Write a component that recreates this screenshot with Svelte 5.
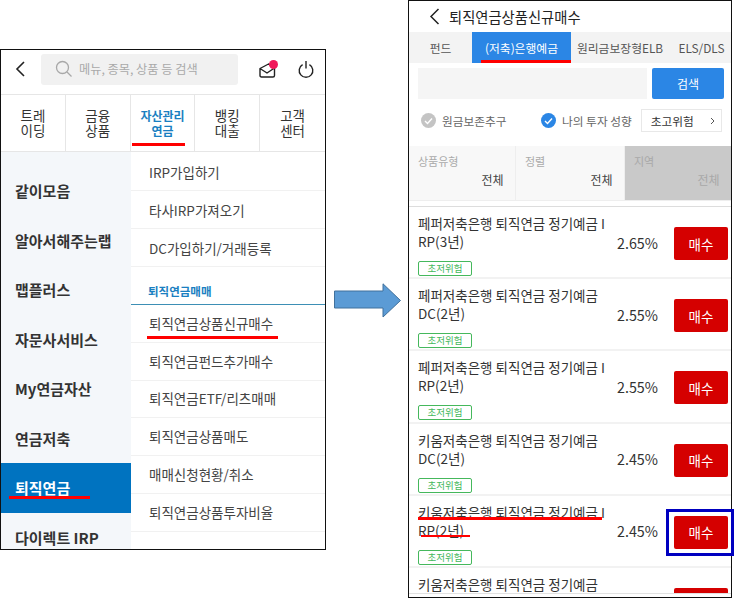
<script>
	const navItems = [
		{ lines: ['트레', '이딩'] },
		{ lines: ['금융', '상품'] },
		{ lines: ['자산관리', '연금'], active: true },
		{ lines: ['뱅킹', '대출'] },
		{ lines: ['고객', '센터'] }
	];
	const sideMenu = ['같이모음', '알아서해주는랩', '맵플러스', '자문사서비스', 'My연금자산', '연금저축', '퇴직연금', '다이렉트 IRP'];
	const topLinks = ['IRP가입하기', '타사IRP가져오기', 'DC가입하기/거래등록'];
	const tradeLinks = ['퇴직연금상품신규매수', '퇴직연금펀드추가매수', '퇴직연금ETF/리츠매매', '퇴직연금상품매도', '매매신청현황/취소', '퇴직연금상품투자비율'];
	const tabs = ['펀드', '(저축)은행예금', '원리금보장형ELB', 'ELS/DLS'];
	const filters = [
		{ label: '상품유형', value: '전체' },
		{ label: '정렬', value: '전체' },
		{ label: '지역', value: '전체', off: true }
	];
	const products = [
		{ lines: ['페퍼저축은행 퇴직연금 정기예금 I', 'RP(3년)'], rate: '2.65%' },
		{ lines: ['페퍼저축은행 퇴직연금 정기예금', 'DC(2년)'], rate: '2.55%' },
		{ lines: ['페퍼저축은행 퇴직연금 정기예금 I', 'RP(2년)'], rate: '2.55%' },
		{ lines: ['키움저축은행 퇴직연금 정기예금', 'DC(2년)'], rate: '2.45%' },
		{ lines: ['키움저축은행 퇴직연금 정기예금 I', 'RP(2년)'], rate: '2.45%', marked: true },
		{ lines: ['키움저축은행 퇴직연금 정기예금'], rate: '', cut: true }
	];
</script>

<div class="page">
	<section class="phone menu">
		<header class="top">
			<svg class="back" width="12" height="18" viewBox="0 0 12 18"><path d="M10 2 L3 9 L10 16" fill="none" stroke="#222" stroke-width="1.6"/></svg>
			<div class="searchbox">
				<svg width="18" height="18" viewBox="0 0 18 18"><circle cx="7.5" cy="7.5" r="6" fill="none" stroke="#a8a8a8" stroke-width="1.3"/><path d="M12 12 L16.5 16.5" stroke="#a8a8a8" stroke-width="1.3"/></svg>
				<span>메뉴, 종목, 상품 등 검색</span>
			</div>
			<div class="mail">
				<svg width="17" height="15" viewBox="0 0 17 15"><path d="M1 5.5 L9.5 1 L15.5 4 V12.5 Q15.5 14 14 14 H2.5 Q1 14 1 12.5 Z M1 5.5 L8 10 L15.5 5" fill="none" stroke="#222" stroke-width="1.4" stroke-linejoin="round"/></svg>
				<i></i>
			</div>
			<svg class="power" width="16" height="18" viewBox="0 0 16 18"><path d="M4.6 4.6 A6.8 6.8 0 1 0 11.4 4.6 M8 1 V8.5" fill="none" stroke="#222" stroke-width="1.4"/></svg>
		</header>

		<nav class="mainnav">
			{#each navItems as item}
				<div class="navcell" class:active={item.active}>
					<span>{item.lines[0]}<br />{item.lines[1]}</span>
					{#if item.active}<b class="redline"></b>{/if}
				</div>
			{/each}
		</nav>

		<div class="columns">
			<ul class="side">
				{#each sideMenu as name}
					<li class:current={name === '퇴직연금'}>
						{name}
						{#if name === '퇴직연금'}<b class="redline"></b>{/if}
					</li>
				{/each}
			</ul>
			<div class="links">
				{#each topLinks as link}
					<div class="link">{link}</div>
				{/each}
				<div class="section">퇴직연금매매</div>
				{#each tradeLinks as link, i}
					<div class="link">
						{link}
						{#if i === 0}<b class="redline"></b>{/if}
					</div>
				{/each}
			</div>
		</div>
	</section>

	<svg class="arrow" width="68" height="35" viewBox="0 0 68 35">
		<path d="M0.5 8 H49 V0.8 L66.5 17.5 L49 34 V25 H0.5 Z" fill="#5b9bd5" stroke="#41719c"/>
	</svg>

	<section class="phone buy">
		<header class="title">
			<svg width="11" height="17" viewBox="0 0 11 17"><path d="M9.5 1 L2 8.5 L9.5 16" fill="none" stroke="#222" stroke-width="1.5"/></svg>
			<h1>퇴직연금상품신규매수</h1>
		</header>

		<div class="tabs">
			{#each tabs as tab, i}
				<div class="tab" class:on={i === 1}>
					{tab}
					{#if i === 1}<b class="redline"></b>{/if}
				</div>
			{/each}
		</div>

		<div class="searchrow">
			<div class="field"></div>
			<button type="button">검색</button>
		</div>

		<div class="options">
			<span class="check gray"><svg width="9" height="8" viewBox="0 0 9 8"><path d="M1 4 L3.5 6.5 L8 1.5" fill="none" stroke="#fff" stroke-width="1.4"/></svg></span>
			<span class="optlabel first">원금보존추구</span>
			<span class="check blue"><svg width="9" height="8" viewBox="0 0 9 8"><path d="M1 4 L3.5 6.5 L8 1.5" fill="none" stroke="#fff" stroke-width="1.4"/></svg></span>
			<span class="optlabel">나의 투자 성향</span>
			<div class="riskbox">
				<span>초고위험</span>
				<svg width="5" height="8" viewBox="0 0 5 8"><path d="M1 1 L4 4 L1 7" fill="none" stroke="#555" stroke-width="1"/></svg>
			</div>
		</div>

		<div class="filters">
			{#each filters as f}
				<div class="filter" class:off={f.off}>
					<span class="flabel">{f.label}</span>
					<span class="fvalue">{f.value}</span>
				</div>
			{/each}
		</div>

		<div class="list">
			{#each products as p}
				<article class="product">
					<div class="info">
						<p>
							{#if p.marked}<b class="redline one"></b><b class="redline two"></b>{/if}
							{p.lines[0]}
							{#if !p.cut}<br />{p.lines[1]}{/if}
						</p>
						{#if !p.cut}<span class="tag">초저위험</span>{/if}
					</div>
					<span class="rate">{p.rate}</span>
					<button type="button" class="buybtn">{p.cut ? '' : '매수'}</button>
				</article>
			{/each}
		</div>

		<i class="bluebox"></i>
	</section>
</div>

<style>
	:global(body) {
		margin: 0;
		background: #fff;
	}

	.page {
		display: flex;
		align-items: flex-start;
		width: 735px;
		height: 598px;
		overflow: hidden;
		font-family: "Noto Sans CJK KR", "Noto Sans", sans-serif;
		color: #333;
	}

	.phone {
		box-sizing: border-box;
		border: 1px solid #111;
		background: #fff;
		flex: none;
	}

	.redline {
		position: absolute;
		display: block;
		height: 3px;
		background: #f00;
	}

	/* left screen */
	.menu {
		width: 326px;
		height: 501px;
		margin-top: 49px;
		overflow: hidden;
	}

	.top {
		display: flex;
		align-items: center;
		box-sizing: border-box;
		height: 44px;
		padding-bottom: 6px;
	}

	.back {
		display: block;
		margin-left: 13px;
	}

	.searchbox {
		display: flex;
		align-items: center;
		gap: 6px;
		width: 183px;
		height: 31px;
		margin-left: 15px;
		padding-left: 14px;
		border-radius: 3px;
		background: #f1f1f1;
		font-size: 12.2px;
		color: #a9a9a9;
	}

	.mail {
		position: relative;
		width: 17px;
		height: 15px;
		margin-left: 21px;
		margin-top: 2px;
	}

	.mail svg {
		display: block;
	}

	.mail i {
		position: absolute;
		top: -3px;
		right: -2px;
		width: 9px;
		height: 9px;
		border-radius: 50%;
		background: #f0195a;
	}

	.power {
		display: block;
		margin-left: 22px;
	}

	.mainnav {
		display: flex;
		height: 58px;
		border-top: 1px solid #e6e6e6;
		border-bottom: 1px solid #e6e6e6;
		box-sizing: border-box;
	}

	.navcell {
		position: relative;
		display: flex;
		align-items: center;
		justify-content: center;
		width: 65px;
		box-sizing: border-box;
		border-right: 1px solid #e6e6e6;
		font-size: 13.5px;
		line-height: 15px;
		text-align: center;
		color: #333;
	}

	.navcell:last-child {
		border-right: 0;
	}

	.navcell.active {
		font-size: 12px;
		font-weight: 700;
		color: #1a7fc1;
	}

	.navcell .redline {
		left: 1px;
		bottom: 5px;
		width: 53px;
	}

	.columns {
		display: flex;
		height: 397px;
	}

	.side {
		box-sizing: border-box;
		width: 130px;
		margin: 0;
		padding: 14px 0 0;
		list-style: none;
		background: #f4f7fa;
		flex: none;
		overflow: hidden;
	}

	.side li {
		position: relative;
		display: flex;
		align-items: center;
		height: 49.5px;
		padding-left: 14px;
		font-size: 15px;
		font-weight: 700;
		color: #333;
	}

	.side li.current {
		background: #0073c0;
		color: #fff;
	}

	.side .redline {
		left: 8px;
		top: 33px;
		width: 81px;
		height: 2.5px;
	}

	.links {
		flex: 1;
		padding-top: 1px;
	}

	.link {
		position: relative;
		display: flex;
		align-items: center;
		box-sizing: border-box;
		height: 38px;
		padding-left: 18px;
		border-bottom: 1px solid #f1f1f1;
		font-size: 13.5px;
		color: #444;
	}

	.section ~ .link {
		height: 37.8px;
		padding-bottom: 1px;
	}

	.section {
		box-sizing: border-box;
		height: 38px;
		padding: 16px 0 0 17px;
		border-bottom: 1px solid #3d8fb5;
		font-size: 11.5px;
		line-height: 16px;
		font-weight: 700;
		color: #1a7fc1;
	}

	.link .redline {
		left: 16px;
		top: 31px;
		width: 131px;
	}

	/* arrow between screens */
	.arrow {
		flex: none;
		margin: 283px 0 0 8px;
	}

	/* right screen */
	.buy {
		position: relative;
		width: 324px;
		height: 598px;
		margin-left: 6px;
	}

	.title {
		display: flex;
		align-items: center;
		gap: 9px;
		height: 31px;
		padding-left: 20px;
	}

	.title h1 {
		margin: 0;
		font-size: 14.3px;
		font-weight: 400;
		color: #222;
	}

	.tabs {
		display: grid;
		grid-template-columns: 63px 99px 98px 1fr;
		height: 31px;
		background: #f3f3f3;
	}

	.tab {
		position: relative;
		display: flex;
		align-items: center;
		justify-content: center;
		font-size: 11.8px;
		color: #555;
		white-space: nowrap;
	}

	.tab:last-child {
		padding-left: 3px;
	}

	.tab.on {
		background: #2b86e5;
		color: #fff;
	}

	.tab .redline {
		left: 9px;
		right: 0;
		bottom: 0;
		height: 3px;
	}

	.searchrow {
		display: flex;
		gap: 5px;
		height: 31px;
		margin-top: 5px;
		padding-left: 9px;
	}

	.field {
		width: 229px;
		background: #f5f5f5;
	}

	.searchrow button {
		width: 72px;
		border: 0;
		border-radius: 2px;
		background: #2b86e5;
		color: #fff;
		font: inherit;
		font-size: 12px;
	}

	.options {
		display: flex;
		align-items: center;
		height: 23px;
		margin-top: 10px;
		padding-left: 12px;
		font-size: 11.7px;
		color: #666;
	}

	.check {
		display: flex;
		align-items: center;
		justify-content: center;
		width: 15px;
		height: 15px;
		border-radius: 50%;
	}

	.check.gray {
		background: #c4c4c4;
	}

	.check.blue {
		background: #2b86e5;
	}

	.optlabel {
		margin-left: 6px;
	}

	.optlabel.first {
		width: 99px;
	}

	.riskbox {
		display: flex;
		align-items: center;
		justify-content: space-between;
		box-sizing: border-box;
		width: 81px;
		height: 23px;
		margin-left: 9px;
		padding: 0 6px 0 9px;
		border: 1px solid #e8e8e8;
		color: #333;
	}

	.filters {
		display: grid;
		grid-template-columns: 107px 109px 1fr;
		height: 54px;
		margin-top: 14px;
		border-bottom: 1px solid #eee;
	}

	.filter {
		display: flex;
		flex-direction: column;
		padding: 7px 11.5px 0 9px;
		background: #f8f8f8;
		border-right: 1px solid #eee;
		font-size: 11px;
	}

	.filter.off {
		background: #c9c9c9;
		border-right: 0;
	}

	.flabel {
		line-height: 16px;
		color: #aaa;
	}

	.fvalue {
		margin-top: 3px;
		text-align: right;
		line-height: 16px;
		font-size: 12px;
		color: #444;
	}

	.filter.off .flabel,
	.filter.off .fvalue {
		color: #a8a8a8;
	}

	.list {
		box-sizing: border-box;
		height: 388px;
		margin-top: 5px;
		border-top: 1px solid #ddd;
		border-bottom: 1px solid #e2e2e2;
		overflow: hidden;
	}

	.product {
		display: flex;
		align-items: center;
		box-sizing: border-box;
		height: 72.2px;
		padding: 0 3px 0 9px;
		border-bottom: 2px solid #f2f2f2;
	}

	.info {
		flex: 1;
		min-width: 0;
		align-self: flex-start;
		padding-top: 7px;
	}

	.info p {
		position: relative;
		margin: 0;
		font-size: 13.5px;
		line-height: 18px;
		color: #333;
		white-space: nowrap;
	}

	.info .one {
		left: 0;
		top: 14px;
		width: 184px;
	}

	.info .two {
		left: 3px;
		top: 32px;
		width: 49px;
		height: 2.5px;
	}

	.tag {
		display: block;
		box-sizing: border-box;
		width: 54px;
		height: 15px;
		margin-top: 11px;
		border: 1.5px solid #45b85c;
		border-radius: 2px;
		font-size: 9.5px;
		line-height: 12px;
		text-align: center;
		color: #45b85c;
	}

	.rate {
		width: 57px;
		font-size: 14.3px;
		color: #333;
	}

	.buybtn {
		display: block;
		align-self: flex-start;
		flex: none;
		width: 54px;
		height: 33px;
		margin-top: 20px;
		padding: 0;
		border: 0;
		border-radius: 2px;
		background: #d50000;
		color: #fff;
		font: inherit;
		font-size: 13.5px;
	}

	.bluebox {
		position: absolute;
		left: 257px;
		top: 508px;
		width: 68px;
		height: 47px;
		box-sizing: border-box;
		border: 3px solid #0000c0;
	}
</style>
